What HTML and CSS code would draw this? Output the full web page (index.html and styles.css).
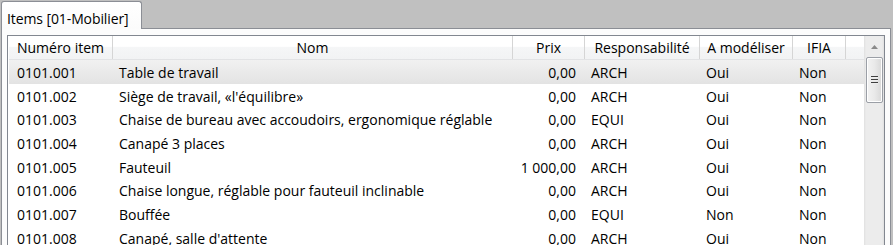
FILE: index.html
```html
<!DOCTYPE html>
<html lang="fr">
<head>
<meta charset="utf-8">
<title>Items [01-Mobilier]</title>
<link rel="stylesheet" href="styles.css">
</head>
<body>
<div class="window">
  <div class="tabstrip">
    <div class="tab">Items [01-Mobilier]</div>
  </div>
  <div class="panel">
    <div class="listview">
      <div class="content">
        <div class="row header">
          <div class="hc">Numéro item</div>
          <div class="hc">Nom</div>
          <div class="hc">Prix</div>
          <div class="hc">Responsabilité</div>
          <div class="hc">A modéliser</div>
          <div class="hc">IFIA</div>
          <div class="hc filler"></div>
        </div>
        <div class="row selected">
          <div class="c">0101.001</div><div class="c name">Table de travail</div><div class="c num">0,00</div><div class="c">ARCH</div><div class="c">Oui</div><div class="c">Non</div>
        </div>
        <div class="row">
          <div class="c">0101.002</div><div class="c name">Siège de travail, «l'équilibre»</div><div class="c num">0,00</div><div class="c">ARCH</div><div class="c">Oui</div><div class="c">Non</div>
        </div>
        <div class="row">
          <div class="c">0101.003</div><div class="c name">Chaise de bureau avec accoudoirs, ergonomique réglable</div><div class="c num">0,00</div><div class="c">EQUI</div><div class="c">Oui</div><div class="c">Non</div>
        </div>
        <div class="row">
          <div class="c">0101.004</div><div class="c name">Canapé 3 places</div><div class="c num">0,00</div><div class="c">ARCH</div><div class="c">Oui</div><div class="c">Non</div>
        </div>
        <div class="row">
          <div class="c">0101.005</div><div class="c name">Fauteuil</div><div class="c num">1 000,00</div><div class="c">ARCH</div><div class="c">Oui</div><div class="c">Non</div>
        </div>
        <div class="row">
          <div class="c">0101.006</div><div class="c name">Chaise longue, réglable pour fauteuil inclinable</div><div class="c num">0,00</div><div class="c">ARCH</div><div class="c">Oui</div><div class="c">Non</div>
        </div>
        <div class="row">
          <div class="c">0101.007</div><div class="c name">Bouffée</div><div class="c num">0,00</div><div class="c">EQUI</div><div class="c">Non</div><div class="c">Non</div>
        </div>
        <div class="row">
          <div class="c">0101.008</div><div class="c name">Canapé, salle d'attente</div><div class="c num">0,00</div><div class="c">ARCH</div><div class="c">Oui</div><div class="c">Non</div>
        </div>
      </div>
      <div class="scrollbar">
        <div class="arrow">
          <svg width="7" height="4" viewBox="0 0 7 4"><path d="M0 4 L3.5 0 L7 4 Z" fill="#8a8a8a"/></svg>
        </div>
        <div class="thumb">
          <div class="grip"><span></span><span></span><span></span></div>
        </div>
      </div>
    </div>
  </div>
</div>
</body>
</html>
```
FILE: styles.css
```css
html, body {
  margin: 0;
  padding: 0;
}
body {
  background: #c0c0c0;
  width: 893px;
  height: 245px;
  overflow: hidden;
  font-family: "Open Sans", "Noto Sans", sans-serif;
  font-size: 14px;
  color: #000;
}
.window {
  padding: 1px 0 0 1px;
  width: 890px;
  height: 244px;
  display: flex;
  flex-direction: column;
}
.tabstrip {
  display: flex;
  position: relative;
  z-index: 1;
  margin-bottom: -1px;
}
.tab {
  width: 134px;
  height: 27px;
  padding-left: 5px;
  line-height: 33px;
  background: linear-gradient(#ffffff, #fbfbfb);
  border: 1px solid #8b8e95;
  border-bottom: none;
  border-radius: 3px 3px 0 0;
  white-space: nowrap;
  letter-spacing: -0.1px;
}
.panel {
  flex: 1;
  min-height: 0;
  border: 1px solid #8b8e95;
  border-bottom: none;
  background: #fcfcfc;
  padding: 6px 5px 0 5px;
  display: flex;
  flex-direction: column;
}
.listview {
  flex: 1;
  min-height: 0;
  display: flex;
  border: 1px solid #828790;
  border-bottom: none;
  background: #fff;
}
.content {
  flex: 1;
  padding-left: 1px;
  display: flex;
  flex-direction: column;
  overflow: hidden;
}
.row {
  flex: none;
  display: grid;
  grid-template-columns: 104px 400px 72px 115px 93px 53px 1fr;
  height: 23.7px;
  line-height: 25px;
  white-space: nowrap;
}
.row .c {
  padding-left: 6px;
  overflow: hidden;
}
.row .c:first-child {
  padding-left: 8px;
}
.row .c.num {
  text-align: right;
  padding-left: 0;
  padding-right: 9px;
}
.row.selected {
  background: linear-gradient(#f1f1f1, #e3e3e3);
}
.row.header {
  height: 24px;
  background: linear-gradient(#ffffff 0%, #ffffff 45%, #f5f6f7 50%, #f2f3f4 100%);
  border-bottom: 1px solid #e2e3e5;
  box-sizing: border-box;
}
.hc {
  text-align: center;
  line-height: 23px;
  border-right: 1px solid #d5d5d5;
}
.hc.filler {
  border-right: none;
}
.scrollbar {
  width: 20px;
  background: linear-gradient(90deg, #e0e0e0 0px, #ececec 2px, #ececec 18px, #e0e0e0 20px);
  display: flex;
  flex-direction: column;
  align-items: center;
}
.arrow {
  height: 21px;
  display: flex;
  align-items: center;
  justify-content: center;
}
.thumb {
  width: 15px;
  height: 44px;
  border: 1px solid #9b9fa6;
  border-radius: 2px;
  background: linear-gradient(90deg, #f3f3f3, #e9e9e9 50%, #d8d8d8);
  box-shadow: inset 0 0 0 1px #ffffff;
  display: flex;
  align-items: center;
  justify-content: center;
}
.grip {
  display: flex;
  flex-direction: column;
  gap: 1px;
}
.grip span {
  display: block;
  width: 7px;
  height: 1px;
  background: #3f3f3f;
  border-bottom: 1px solid #eeeeee;
}
```
